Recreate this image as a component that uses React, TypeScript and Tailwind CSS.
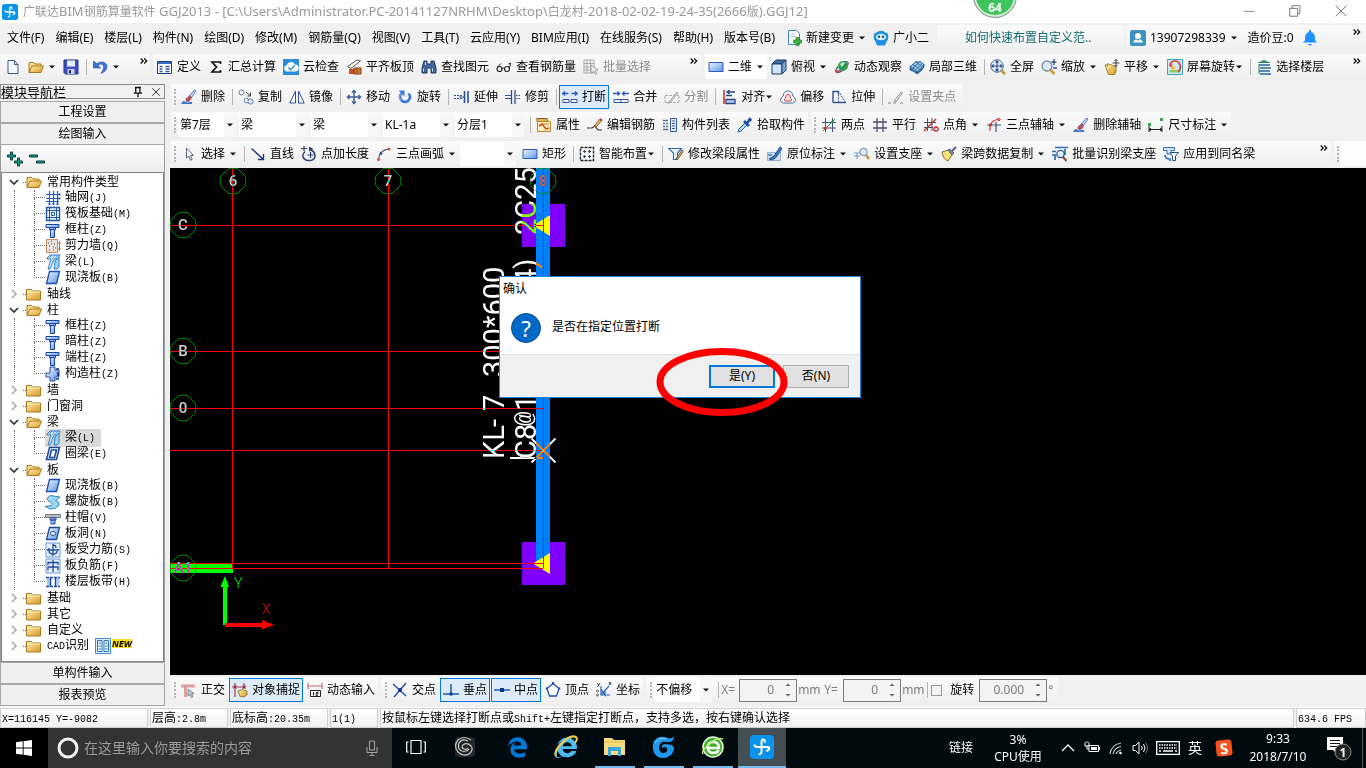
import React from "react";
import { FaInternetExplorer } from "react-icons/fa";
import { FaEdgeLegacy } from "react-icons/fa6";

type IconProps = { children: React.ReactNode; size?: string };

const Svg = ({ children, size = "h-4 w-4" }: IconProps) => (
  <svg viewBox="0 0 16 16" className={`${size} shrink-0`} aria-hidden="true">
    {children}
  </svg>
);

const folder = (
  <>
    <path d="M.5 3.5h5l1 1.5h8v9H.5z" fill="url(#gold)" stroke="#a9791f" />
    <path d="M1.5 6h12.5" stroke="#fff3c4" />
  </>
);
const folderOpen = (
  <>
    <path d="M1 13V3.500h4.500L7 5h6v3" fill="#f7d98a" stroke="#a9791f" />
    <path d="M1 13.500 4 7h11.500L13 13.500z" fill="url(#gold)" stroke="#a9791f" />
  </>
);
const column = (
  <>
    <path d="M1 2.500h13v3H1z" fill="url(#blue)" stroke="#12439c" />
    <path d="M4.500 5.500h6v2h-6z" fill="#9cc0f5" stroke="#12439c" />
    <path d="M5.500 7.500h4v8h-4z" fill="url(#blue)" stroke="#12439c" />
  </>
);
const slab = <path d="M4.500 1.500h10l-3 12h-10z" fill="url(#blue)" stroke="#1b4cb0" strokeWidth="1.300" />;
const brush = (
  <>
    <path d="M0 15q2-4 4-2.500t5 .5 2 2z" fill="#3f76c9" />
    <path d="m13.500 1 1.500 1-4.500 6.500-2-1.500z" fill="#cfe0f7" stroke="#2b58a6" strokeWidth=".8" />
    <path d="m8.500 7 2 1.500-2 3.500-3 .5-.5-2.500z" fill="#c9505a" stroke="#6b3340" strokeWidth=".7" />
  </>
);
const rect = <path d="M1 3.500h14v9H1z" fill="url(#blue)" stroke="#2a5cc4" />;

const icons: Record<string, React.ReactNode> = {
  folder,
  folderOpen,
  column,
  slab,
  brush,
  rect,
  newFile: <path d="M3 1.500h6.500l3.500 4v9H3zM9.500 1.500v4H13" fill="#f6faff" stroke="#3e5c8a" />,
  save: (
    <>
      <path d="M1 1h14v14H2.500L1 13.500z" fill="#3b50c4" stroke="#22307f" />
      <path d="M4 1.500h8v6H4z" fill="#e8edff" />
      <path d="M4.500 10h7v5h-7z" fill="#c9d2f2" />
      <path d="M6 11h2v3.500H6z" fill="#22307f" />
    </>
  ),
  undo: <path d="M1.500 2v7h7L6 6.500Q9 4 11 6t-2 8.500q6.500-2.500 6-8Q12 .5 4.500 4.500z" fill="#3a72d8" stroke="#1c469e" strokeWidth=".6" />,
  define: (
    <>
      <path d="M.5 2.500h14v12H.5z" fill="#fff" stroke="#1b3f86" />
      <path d="M1 3h13v2H1z" fill="#3a6bc0" />
      <path d="M2.500 7.500h3m-3 2.500h3m-3 2.500h3M8.500 7.500h4m-4 2.500h4m-4 2.500h4" stroke="#36578f" strokeWidth="1.300" />
    </>
  ),
  sigma: <path d="M12.500 5V3H4l4.500 5L4 13h8.500v-2" fill="none" stroke="#111" strokeWidth="1.700" />,
  cloud: (
    <>
      <path d="M0 0h16v16H0z" fill="#2b8ed6" />
      <path d="M4 12.500a3.200 3.200 0 0 1-.3-6.300A4.500 4.500 0 0 1 12 5.500a3.500 3.500 0 0 1 .3 7z" fill="#fff" />
      <path d="m5.500 8.500 2 2.200L12 6.500" fill="none" stroke="#2b8ed6" strokeWidth="1.500" />
    </>
  ),
  align3: (
    <>
      <path d="M1.500 7.500 11 1l3.500 1L5 9.500z" fill="#fff4d0" stroke="#445c8a" />
      <path d="M3 10h6v5H3z" fill="#c9542b" />
      <path d="M8 9h7v6H8z" fill="#e2a33b" stroke="#843312" />
      <path d="M8 11h7m-7 2h7M11 9v6" stroke="#843312" strokeWidth=".7" />
    </>
  ),
  binoculars: (
    <>
      <path d="M3 2h3v3h4V2h3l2 7v5h-5V9H6v5H1V9z" fill="#46679d" stroke="#1d3567" />
      <path d="M2.500 9.500v3M11.500 9.500v3M4.500 3v3" stroke="#d3e3fa" />
    </>
  ),
  glasses: (
    <>
      <circle cx="3.500" cy="10" r="2.500" fill="none" stroke="#222" strokeWidth="1.200" />
      <circle cx="11" cy="10" r="2.500" fill="none" stroke="#222" strokeWidth="1.200" />
      <path d="M6 9.500q1.500-1 2.500 0M1.500 8 5 4.500M13.500 9l1-5-2 1" fill="none" stroke="#222" />
    </>
  ),
  batch: (
    <>
      <path d="M1 1h10v13H1zM1 4.500h10M1 8h10M1 11h10M4 1v13M7.500 1v13" fill="none" stroke="#a9a9a9" />
      <path d="m8 6 7 5-3 .5 2 3-1.500 1-1.500-3L8 14z" fill="#e8e8e8" stroke="#999" strokeWidth=".8" />
    </>
  ),
  cube: (
    <>
      <path d="m1 5 4-4h10l-4 4z" fill="#3f6da5" stroke="#1b3a66" />
      <path d="M1 5h10v10H1z" fill="#cfe6fb" stroke="#1b3a66" />
      <path d="m11 5 4-4v10l-4 4z" fill="#7ea8d8" stroke="#1b3a66" />
    </>
  ),
  orbit: (
    <>
      <ellipse cx="8" cy="8" rx="7.500" ry="3" transform="rotate(-40 8 8)" fill="none" stroke="#3c4d8a" />
      <circle cx="9" cy="7" r="5" fill="#33a64b" />
      <path d="M6 5q3-3 5-1L8 8z" fill="#bff0c5" />
      <path d="M2 13Q8 12 13 4" fill="none" stroke="#3c4d8a" />
      <circle cx="3" cy="12.500" r="1.800" fill="#d4483b" />
    </>
  ),
  local3d: (
    <>
      <path d="m1 8 6-5.500q2 1.500 4 0l4 3q-1 3-7 7.500-1-3-7-5z" fill="#9cc8ec" stroke="#21558d" />
      <path d="m1 8v3q4 1 7 4v-2M8 13v2q6-4 7-7.500V5.500" fill="#3274ad" stroke="#21558d" strokeWidth=".8" />
      <path d="m4 5.500 6.500 4.500M7.500 3.500l5 4M4 9l6-5.500M6.500 11l6.500-6" stroke="#21558d" strokeWidth=".8" />
    </>
  ),
  full: (
    <>
      <circle cx="7" cy="7" r="6.200" fill="#e5effc" stroke="#3c587f" />
      <path d="M7 2v10M2 7h10M5.500 3.500 7 2l1.500 1.500M5.500 10.500 7 12l1.500-1.500M3.500 5.500 2 7l1.500 1.500M10.500 5.500 12 7l-1.500 1.500" fill="none" stroke="#254e93" strokeWidth="1.100" />
      <path d="m11.500 11.500 3.500 3.500" stroke="#c99131" strokeWidth="2.500" />
    </>
  ),
  zoom: (
    <>
      <circle cx="6" cy="7" r="5" fill="#dcebfb" stroke="#7d8ba0" strokeWidth="1.300" />
      <path d="m9.500 11 4 4" stroke="#cf9a34" strokeWidth="2.500" />
      <path d="M13 0v6M10.500 3h5M12 9h4" stroke="#2b4f91" strokeWidth="1.300" />
    </>
  ),
  pan: (
    <>
      <path d="M1 6q1-1 2.500 1L3 5q1.500-1 2.500 1 .5-1.500 2 0t4 1q2 5-1 8.500H4.500z" fill="url(#gold)" stroke="#8a6b24" strokeWidth=".8" />
      <path d="M12 .5v7M8.500 4H15.500M10.500 2 12 .5 13.500 2M10.500 6 12 7.500 13.500 6" fill="none" stroke="#333" strokeWidth=".9" />
    </>
  ),
  screenRotate: (
    <>
      <path d="M.5.500h15v15H.5z" fill="#cdebf5" stroke="#38a5cc" />
      <path d="M2.500 11h11v2.500h-11z" fill="#8fce63" />
      <path d="M3 6Q4 2 8 2t5 4-2 7" fill="none" stroke="#e03a32" strokeWidth="1.700" />
      <circle cx="6" cy="9" r="2" fill="#f5b83b" />
      <path d="m1.500 7 3 1 1-3z" fill="#e03a32" />
    </>
  ),
  floors: (
    <>
      <path d="M1 4 8 1l7 3H1z" fill="#2f8b5b" />
      <path d="M3 6h11M4 9h11M3 12h11M4 15h11" stroke="#246a9f" strokeWidth="1.600" />
      <path d="M3 5v10" stroke="#2f8b5b" />
    </>
  ),
  copy: (
    <>
      <circle cx="3.500" cy="3.500" r="2.500" fill="#fff" stroke="#5b79a6" />
      <circle cx="8.500" cy="11.500" r="2.300" fill="#fff" stroke="#5b79a6" />
      <circle cx="12.500" cy="12.500" r="2.600" fill="#e4eefb" stroke="#5b79a6" />
      <path d="m8 3 4 3.500M12.500 3.500v3.500h-3" fill="none" stroke="#3a3a3a" />
    </>
  ),
  mirror: (
    <>
      <path d="M6.500 2v12H.8z" fill="#fff" stroke="#2a4f9c" />
      <path d="M9.500 2v12h5.700z" fill="#fff" stroke="#2a4f9c" />
    </>
  ),
  move: <path d="M8 1v14M1 8h14M6 3.500 8 1.500l2 2M6 12.500l2 2 2-2M3.500 6l-2 2 2 2M12.500 6l2 2-2 2" fill="none" stroke="#3f5f94" strokeWidth="1.500" />,
  rotate: (
    <>
      <path d="M4.500 4.500Q1.500 8 4.500 11.500q3.500 3 7 0 3-3.500 0-7" fill="none" stroke="#3978dc" strokeWidth="2.600" />
      <path d="M1.500 1.500h6v6z" fill="#3978dc" />
      <path d="M3.500 5Q1 8.500 4 12" fill="none" stroke="#9cc2f7" strokeWidth=".8" />
    </>
  ),
  extend: (
    <>
      <path d="M0 6.500h8m-8 3h8" stroke="#2c4f91" strokeDasharray="2 1" />
      <path d="M10.500 2v12M14 2v12" stroke="#2c4f91" strokeWidth="1.600" />
      <path d="M5 8h5" stroke="#2c4f91" />
    </>
  ),
  trim: (
    <>
      <path d="M0 6.500h6m-6 3h6" stroke="#2c4f91" />
      <path d="M6.500 1v14M10 1v14" stroke="#2c4f91" strokeWidth="1.300" />
      <path d="M11 6.500h5m-5 3h5" stroke="#2c4f91" strokeDasharray="1.500 1" />
    </>
  ),
  breakIt: (
    <>
      <path d="M1 10.500h6v3H1zM9 10.500h6v3H9z" fill="#fff" stroke="#32549b" />
      <path d="M0 4.500h6.500M9.500 4.500H16M3 2.500 1 4.500l2 2M13 2.500l2 2-2 2" fill="none" stroke="#2c5bc0" strokeWidth="1.400" />
    </>
  ),
  merge: (
    <>
      <path d="M1 10.500h14v3H1zM8 10.500v3" fill="#fff" stroke="#32549b" />
      <path d="M0 4.500h6.500M9.500 4.500H16M4.500 2.500l2 2-2 2M11.500 2.500l-2 2 2 2" fill="none" stroke="#2c5bc0" strokeWidth="1.400" />
    </>
  ),
  split: (
    <>
      <path d="M1 6.500h14M1 13.500h14M1 7v6M15 7v6" fill="none" stroke="#aaa" strokeDasharray="3 1" />
      <path d="m4 14 9-11 1 1L6 14z" fill="#d5d5d5" stroke="#999" strokeWidth=".8" />
    </>
  ),
  alignTo: (
    <>
      <path d="M3 1v14" stroke="#c22b2b" strokeWidth="1.500" />
      <path d="M5 10.500h9v4H5zM5 6.500h6" fill="#bcd2f4" stroke="#24478d" strokeWidth="1.300" />
      <path d="M14 3H6M8.500 1 6 3l2.500 2" fill="none" stroke="#24478d" strokeWidth="1.300" />
    </>
  ),
  offset: (
    <>
      <path d="M3 14q-4-1.500-1.500-5.500L3 7q1-5 5-5t5 5l1.500 1.500Q17 12.500 13 14z" fill="#fff" stroke="#4a6a9c" />
      <path d="M5 12Q3 10 5.500 9 6 5 8 5t2.500 4Q13 10 11 12z" fill="#fbe3e3" stroke="#cc3a3a" />
    </>
  ),
  stretch: (
    <>
      <path d="M2 13.500v-11h5.500v3" fill="none" stroke="#2c4f91" strokeWidth="1.400" />
      <path d="M2 13.500h13" stroke="#2c4f91" strokeWidth="1.400" />
      <path d="M7.500 2.500v11M9 4.500l5.500 9" stroke="#2c4f91" strokeDasharray="2 1" />
    </>
  ),
  grip: (
    <>
      <path d="M0 14h3M5 14h3M12 14h3" stroke="#aaa" strokeWidth="1.500" />
      <path d="m6 12 7-9 1.500 1L8 13z" fill="#ddd" stroke="#999" />
    </>
  ),
  props: (
    <>
      <path d="M1 1.500h10l1 3H1z" fill="#dcb258" stroke="#87601b" />
      <path d="M1.500 4.500h13v10h-13z" fill="#fff2c7" stroke="#b8822b" />
      <path d="m3 9 3-2 4 5 3-1" fill="none" stroke="#c45b24" strokeWidth="1.800" />
      <path d="M7 7h6" stroke="#b8822b" />
    </>
  ),
  editBar: (
    <>
      <path d="M0 11h5l3-2 3 4h4" fill="none" stroke="#333" strokeWidth="1.200" />
      <path d="m7 9 6-7 2 1.500L9 10z" fill="#e4b15a" stroke="#7a4a1c" strokeWidth=".8" />
      <path d="m13 2 2 1.500" stroke="#c93434" strokeWidth="2" />
    </>
  ),
  list: (
    <>
      <path d="M8.500 1.500h6v13h-6z" fill="#e9f1fd" stroke="#33559a" />
      <path d="M10 4h3m-3 2.500h3M10 9h3m-3 2.500h3" stroke="#33559a" />
      <path d="M1 3.500h5M1 6.500h2m1 0h2M1 9.500h2m1 0h2M1 12.500h5" stroke="#5c6d8c" strokeWidth="1.300" />
    </>
  ),
  pick: (
    <>
      <path d="m1 15 1-3 6-6 2 2-6 6z" fill="#b9e0f8" stroke="#28579b" />
      <path d="m7 4 5 5M9.500 6.500l3.500-4" stroke="#1c4fae" strokeWidth="2.600" />
      <path d="M12 3.500 14 1.500" stroke="#1c4fae" strokeWidth="3.500" />
    </>
  ),
  twoPoint: (
    <>
      <path d="M4.500 1v14M11.500 1v14M1 5.500h14M1 11h14" stroke="#43517a" />
      <path d="m2 14 12-12" stroke="#2a8f3b" />
      <circle cx="4.500" cy="11" r="1.500" fill="#d92b2b" />
      <circle cx="11.500" cy="5" r="1.500" fill="#2a8f3b" />
    </>
  ),
  parallel: (
    <>
      <path d="M5 1v14M11 1v14" stroke="#3c4f86" strokeWidth="1.300" />
      <path d="M1 5h14M1 11h14" stroke="#5d4468" strokeWidth="1.300" />
    </>
  ),
  pointAngle: (
    <>
      <path d="M4.500 1v13M9 1v13M1 5.500h12M1 10.500h9" stroke="#43517a" />
      <path d="m1 14 12-12" stroke="#c92b2b" strokeWidth="1.200" />
      <circle cx="13" cy="12" r="2" fill="none" stroke="#d92b2b" strokeWidth="1.400" />
    </>
  ),
  threeAxis: (
    <>
      <path d="M1 8h14M10 5v10" stroke="#43517a" strokeWidth="1.200" />
      <path d="M4 14Q3 3 13 2.500" fill="none" stroke="#d02f2f" strokeWidth="1.200" />
      <circle cx="13" cy="2.500" r="1.200" fill="none" stroke="#d02f2f" />
      <circle cx="4.500" cy="8" r="1.200" fill="none" stroke="#d02f2f" />
    </>
  ),
  dim: (
    <>
      <path d="M1 9v6M14 9v6M1 12.500h13M3 11l-2 1.500L3 14M12 11l2 1.500-2 1.500" fill="none" stroke="#222" />
      <path d="M0 6h3v3H0zM12 1h3v3h-3z" fill="#3ba54b" />
    </>
  ),
  cursor: <path d="M5.500 2v10l2.300-2 1.700 4.200 1.700-.7-1.700-4h3z" fill="#fff" stroke="#5a6684" />,
  line: <path d="m1.500 2.500 12 11M13.500 8v5.500H8" fill="none" stroke="#20376f" strokeWidth="1.400" />,
  lengthPt: (
    <>
      <path d="M4 5.500q-5 5 1 8.500 7 2 9-3 .5-5-4.500-7.500" fill="none" stroke="#2b4170" strokeWidth="1.500" />
      <path d="M0 2.500h6M3 0v5M6.500 9h6M9.500 6v6" stroke="#2b4170" strokeWidth="1.200" />
      <path d="m8 .5 4.500 2.500L8 5.500z" fill="#2b4170" />
    </>
  ),
  arc: (
    <>
      <path d="M2.500 14Q3 4 13 3" fill="none" stroke="#33457a" strokeWidth="1.200" />
      <circle cx="2.500" cy="13.500" r="1.500" fill="#e0492c" />
      <circle cx="5" cy="7.500" r="1.400" fill="#33457a" />
      <circle cx="13" cy="3" r="1.500" fill="#e0492c" />
    </>
  ),
  smart: (
    <>
      <path d="M1.500 1.500h13v13h-13z" fill="#fff" stroke="#222" strokeDasharray="3 1" strokeWidth="1.400" />
      <path d="M5.500 4v3M4 5.500h3M10.500 4v3M9 5.500h3M5.500 9v3M4 10.500h3M10.500 9v3M9 10.500h3" stroke="#345" strokeWidth="1.200" />
    </>
  ),
  beamEdit: (
    <>
      <path d="M.5 2.500h13L9.500 7v6.500H5.500V7z" fill="#e8f5ff" stroke="#2d6fb0" strokeWidth="1.200" />
      <path d="m8 13 6-9 1.500 1.500-6 8z" fill="#efb65c" stroke="#553a1c" strokeWidth=".8" />
    </>
  ),
  annotate: (
    <>
      <path d="M.5 6.500h13v8H.5z" fill="#cfe0f7" stroke="#8fb3dd" />
      <path d="m2 13 5-3 6-9 2 1.500-6 9-4 2.500z" fill="#3f79c9" stroke="#173f80" strokeWidth=".9" />
      <path d="M1 9h4" stroke="#3f79c9" strokeWidth="1.500" />
    </>
  ),
  support: (
    <>
      <path d="M0 7h8M0 10h6M3 7v6" fill="none" stroke="#76a2d0" strokeWidth="1.200" />
      <circle cx="9.500" cy="6" r="3.700" fill="#dcecfb" stroke="#6d87a8" />
      <path d="m12 9 3 4" stroke="#c98a3c" strokeWidth="2.200" />
    </>
  ),
  spanCopy: (
    <>
      <path d="m1 6 6-2 4 5-4 6q-5-2-6-9z" fill="#f2e17c" stroke="#85762a" />
      <path d="m7 4 2-1 4 4-2 2z" fill="#8b93a8" stroke="#4a5268" strokeWidth=".8" />
      <path d="m11 5 4-4" stroke="#5a648a" strokeWidth="2.200" />
    </>
  ),
  recog: (
    <>
      <path d="M3 1.500h13M0 5.500h4M0 9h4M3 9v5M13 3v6" stroke="#2e6cae" strokeWidth="1.700" />
      <circle cx="8.500" cy="8" r="3.700" fill="#dcecfb" stroke="#2e5c94" strokeWidth="1.300" />
      <path d="m11 11 3.500 4" stroke="#8a4b32" strokeWidth="2" />
    </>
  ),
  applyTo: (
    <>
      <path d="M.5 1.500h11v3H8V8H4V4.500H.5z" fill="#cfe6fb" stroke="#2d6fb0" />
      <path d="M7 6.500h8.500L12.500 10v4.500h-3V10z" fill="#fff" stroke="#1b4f8f" />
      <path d="M2 9q0 4 5 4v2" fill="none" stroke="#2d6fb0" strokeWidth="1.600" />
    </>
  ),
  ortho: (
    <>
      <path d="M0 2.500h14v3H6V15H3V5.500H0z" fill="#dda0a0" />
      <path d="M7 7v7l2-1.500 1.500 3 1.500-.8-1.500-3h2.500z" fill="#c4ccd8" stroke="#6a7688" strokeWidth=".8" />
    </>
  ),
  snap: (
    <>
      <path d="M3 1v14M12 1v6M0 5h14" stroke="#b23a4a" strokeWidth="1.200" />
      <path d="m1.500 3.500 3 3m0-3-3 3M10.500 3.500l3 3m0-3-3 3" stroke="#8c2634" />
      <path d="M6 9q4-3 9 0v4q-3 3-7 1.500z" fill="url(#gold)" stroke="#8a6b24" strokeWidth=".8" />
    </>
  ),
  dynInput: (
    <>
      <path d="M1 1v6M15 1v6M1 4h14" stroke="#c26a74" strokeWidth="1.200" />
      <path d="M3.500 8.500h10v6h-10z" fill="#fff" stroke="#222" />
      <path d="M6.500 10v3.500M9 10.500h2v1.300H9v1.500h2" fill="none" stroke="#222" />
    </>
  ),
  cross: (
    <>
      <path d="m1 2 13 12M14 1 2 15" stroke="#1d4fae" strokeWidth="1.400" />
      <circle cx="8" cy="8" r="2" fill="#14357f" />
    </>
  ),
  perp: (
    <>
      <path d="M8 2v10M0 12h16" stroke="#1d5fb8" strokeWidth="1.500" />
      <path d="M6.500 10.500h3v3h-3z" fill="#14357f" />
    </>
  ),
  mid: (
    <>
      <path d="M0 8h16" stroke="#1d5fb8" strokeWidth="1.500" />
      <path d="M6 6h4v4H6z" fill="#14357f" />
    </>
  ),
  vertex: (
    <>
      <path d="m8 1.500 6 5-2.500 7.500h-7L2 6.500z" fill="#fff" stroke="#1d4fae" strokeWidth="1.300" />
      <path d="M7 0h2v2.500H7zM.8 5.500h2v2h-2zM13.200 5.500h2v2h-2z" fill="#1d4fae" />
    </>
  ),
  coord: (
    <>
      <path d="M5 4v9h9M5 13l8-9M5 7l4 6V9.500" fill="none" stroke="#2b66b8" strokeWidth="1.200" />
      <path d="M1 1l1.500 2M4 1 1.500 5M13 0l2 3M15 0l-2 3" stroke="#444" />
      <circle cx="1.500" cy="9" r="1" fill="none" stroke="#444" strokeWidth=".8" />
      <circle cx="1.500" cy="13" r="1" fill="none" stroke="#444" strokeWidth=".8" />
    </>
  ),
  newDoc: (
    <>
      <path d="M2.500.500h8l3 3v11h-11z" fill="#fff" stroke="#3b87c4" />
      <path d="M4.500 4h5M4.500 6.500h6" stroke="#9fc4e4" />
      <path d="M10 7.500h3v2.500h2.500v3H13v2.500h-3V13H7.500v-3H10z" fill="#3fae3f" stroke="#1e7a26" strokeWidth=".6" />
    </>
  ),
  robot: (
    <>
      <path d="M1 5Q0 3 2 3.500 8-2 14 3.500 16 3 15 5q1 4-1.500 6.500L12 15.500H4L2.500 11.500Q0 9 1 5z" fill="#1f8fdf" />
      <ellipse cx="8" cy="7" rx="5.200" ry="3.300" fill="#d9f0ff" />
      <circle cx="6" cy="6.800" r="1.200" fill="#124d84" />
      <circle cx="10" cy="6.800" r="1.200" fill="#124d84" />
    </>
  ),
  user: (
    <>
      <rect width="16" height="16" rx="2" fill="#3f93c4" />
      <circle cx="8" cy="6" r="3" fill="#fff" />
      <path d="M3 12.500q1-3 3-3.200l2 1.400 2-1.400q2 .2 3 3.200z" fill="#fff" />
    </>
  ),
  bell: (
    <>
      <path d="M7 0h2v2q4 1 4 6v2.500l2 2H1l2-2V8q0-5 4-6z" fill="#1e90ff" />
      <path d="M6 14h4q-2 3-4 0z" fill="#1e90ff" />
    </>
  ),
  axisNet: (
    <>
      <path d="M4.500 1v12M8.500 1v12M12.500 1v12M1 4.500h13M1 8.500h13M1 11.500h13" stroke="#2a5bc0" strokeWidth="1.200" />
      <path d="M3.500 13h2v2h-2zM7.500 13h2v2h-2zM11.500 13h2v2h-2zM13.500 3.500h2v2h-2zM13.500 7.500h2v2h-2z" fill="#2a5bc0" />
    </>
  ),
  raft: (
    <>
      <path d="M1.500 1.500h13v13h-13z" fill="#e6f2ff" stroke="#1f5a9e" strokeWidth="1.400" />
      <path d="M4.500 1.500v13M11.500 1.500v13M1.500 4.500h13M1.500 11.500h13" stroke="#1f5a9e" />
      <path d="M6.500 6.500h3v3h-3z" fill="none" stroke="#1f5a9e" />
    </>
  ),
  shearWall: (
    <>
      <path d="M1.500 1.500h11v13h-11z" fill="#e8e2dd" stroke="#c98a62" />
      <path d="M3 5h1m2-2h1m2 3h1M4 8h1m3 1h1M4 12h1m3 0h1m1-2h1M6 6h1" stroke="#555" />
      <path d="M13 5h3M13 11h3M14.500 3v10" stroke="#d96a2b" />
    </>
  ),
  beam: (
    <>
      <path d="m2 4 3-3h10l-2 4H9L5 15H3L6 5H2z" fill="#d6ecff" stroke="#2b7cc4" />
      <path d="m9 15 1-8 4-4v10l-2 2z" fill="#9fd0f7" stroke="#2b7cc4" />
      <path d="m4 4 3-3M7 5l3-4M10 5l3-4" stroke="#2b7cc4" strokeWidth=".8" />
    </>
  ),
  ringBeam: <path d="M4.500 1.500h10l-3 12h-10zM6.500 4h5l-2 7.500h-5z" fill="#fff" stroke="#1c4a9e" strokeWidth="1.600" />,
  tieColumn: (
    <>
      <path d="M5 1h5v3h4v7h-4v4H5v-4H1V7h4z" fill="url(#blue)" stroke="#244e99" />
      <path d="M11 3h3M11 13h3M13 6v4" stroke="#12306c" strokeWidth="1.700" />
    </>
  ),
  spiral: <path d="M5 1.500 15 3l-4.500 3.500Q15 8 14 11q-3 4-8 4L0 12.500l6-1q3-1 0-3Q1 6 2.500 4z" fill="#9fd8f2" stroke="#2a86bd" />,
  cap: (
    <>
      <path d="M.5 4.500h15v3H.5z" fill="#b8bcc4" stroke="#70757e" />
      <path d="M5 8h6v2H5zM6 10h4v4H6z" fill="url(#blue)" stroke="#1c4fae" />
    </>
  ),
  hole: (
    <>
      <path d="M4.500 1.500h10l-3 12h-10z" fill="url(#blue)" stroke="#1c4a9e" strokeWidth="1.300" />
      <ellipse cx="8" cy="7.500" rx="2.500" ry="2" fill="#fff" stroke="#1c4a9e" />
    </>
  ),
  rebarS: (
    <>
      <path d="M1 1h14v14H1z" fill="#e6f0fd" stroke="#6b95d6" />
      <path d="M8 2v12M2 8h12M4 6v3q0 3 4 3t4-3M8 3q3 0 3 3" fill="none" stroke="#1b4a9c" strokeWidth="1.300" />
    </>
  ),
  rebarF: (
    <>
      <path d="M1 1h14v14H1z" fill="#e6f0fd" stroke="#6b95d6" />
      <path d="M8 2v12M3 7V4.500h10V7M3 12.500V9h10v3.500" fill="none" stroke="#1b4a9c" strokeWidth="1.300" />
    </>
  ),
  band: (
    <>
      <path d="M2 4h3v8H2zM11.500 4h3v8h-3z" fill="#a9ccf5" />
      <path d="M1 3.500h14M1 12.500h14" stroke="#1b4a9c" strokeWidth="1.500" strokeDasharray="3 1" />
      <path d="M5.500 3v10M10.500 3v10" stroke="#1b4a9c" strokeWidth="1.500" />
    </>
  ),
  cad: (
    <>
      <path d="M.5.500h15v15H.5z" fill="#e1f1ff" stroke="#3d8ad4" />
      <path d="M2.500 2.500h4.500v11H2.500zM9 2.500h4.500v11H9z" fill="#fff" stroke="#2571bd" />
      <path d="M3.500 5h2.500M3.500 8h2.500M3.500 11h2.500M10 5h2.500M10 8h2.500M10 11h2.500" stroke="#2571bd" />
    </>
  ),
};

const Icon = ({ name, size }: { name: string; size?: string }) => <Svg size={size}>{icons[name]}</Svg>;

const Caret = ({ tight = false }: { tight?: boolean }) => (
  <svg viewBox="0 0 8 8" className={tight ? "-ml-1 h-2 w-2 shrink-0" : "h-2 w-2 shrink-0"} aria-hidden="true">
    <path d="M1 2.500h6L4 5.500z" fill="#111" />
  </svg>
);

type ToolProps = { icon: string; label?: string; name?: string; arrow?: boolean | "tight"; disabled?: boolean; active?: boolean };

const Tool = ({ icon, label, name, arrow, disabled, active }: ToolProps) => (
  <button
    type="button"
    disabled={disabled}
    aria-label={label ?? name}
    className={`flex h-6 shrink-0 items-center gap-1 whitespace-nowrap border px-0.5 ${
      active ? "border-[#0078d7] bg-[#dcebf7]" : "border-transparent"
    } ${disabled ? "text-[#8c8c8c]" : "text-black"}`}
  >
    <Icon name={icon} />
    {label && <span>{label}</span>}
    {arrow && <Caret tight={arrow === "tight"} />}
  </button>
);

const Sep = () => <span className="ml-[3px] mr-px h-4 w-px shrink-0 bg-[#b4b4b4]" />;
const Grip = () => <span className="mr-px h-4 w-0 shrink-0 border-l-2 border-dotted border-[#b5b5b5]" />;
const More = () => (
  <svg viewBox="0 0 8 6" className="mb-3 h-1.5 w-2 shrink-0" aria-hidden="true">
    <path d="m.7.500 2.500 2.500L.7 5.500M4.200.500l2.500 2.500-2.500 2.500" fill="none" stroke="#111" strokeWidth="1.300" />
  </svg>
);

const Bar = ({ children, className = "" }: { children: React.ReactNode; className?: string }) => (
  <div className={`flex h-[26px] items-center gap-px bg-linear-to-b from-[#fbfbfb] to-[#eeeeee] ${className}`}>{children}</div>
);

const Combo = ({ value, label, width }: { value: string; label: string; width: string }) => (
  <div className={`relative mr-0.5 h-6 shrink-0 bg-white ${width}`}>
    <select aria-label={label} defaultValue={value} className="h-full w-full appearance-none bg-transparent pl-0.5 pr-3 outline-none">
      <option>{value}</option>
    </select>
    <span className="pointer-events-none absolute inset-y-0 right-0 flex w-3 items-center bg-[#f7f7f7] pl-0.5">
      <Caret />
    </span>
  </div>
);

/* Sets the Latin runs of a mixed string in a size or face of their own. */
const Mixed = ({ text, latin }: { text: string; latin: string }) => (
  <span className="whitespace-pre">
    {text.split(/([\x20-\x7e]+)/).map((part, i) =>
      i % 2 ? (
        <span key={i} className={latin}>
          {part}
        </span>
      ) : (
        part
      ),
    )}
  </span>
);
const Cells = ({ text }: { text: string }) => <Mixed text={text} latin="font-['Liberation_Mono',monospace] text-[10px]" />;

const menus = ["文件(F)", "编辑(E)", "楼层(L)", "构件(N)", "绘图(D)", "修改(M)", "钢筋量(Q)", "视图(V)", "工具(T)", "云应用(Y)", "BIM应用(I)", "在线服务(S)", "帮助(H)", "版本号(B)"];

type Leaf = [icon: string, label: string];
const tree: { label: string; items?: Leaf[]; selected?: number }[] = [
  { label: "常用构件类型", items: [["axisNet", "轴网(J)"], ["raft", "筏板基础(M)"], ["column", "框柱(Z)"], ["shearWall", "剪力墙(Q)"], ["beam", "梁(L)"], ["slab", "现浇板(B)"]] },
  { label: "轴线" },
  { label: "柱", items: [["column", "框柱(Z)"], ["column", "暗柱(Z)"], ["column", "端柱(Z)"], ["tieColumn", "构造柱(Z)"]] },
  { label: "墙" },
  { label: "门窗洞" },
  { label: "梁", items: [["beam", "梁(L)"], ["ringBeam", "圈梁(E)"]], selected: 0 },
  {
    label: "板",
    items: [["slab", "现浇板(B)"], ["spiral", "螺旋板(B)"], ["cap", "柱帽(V)"], ["hole", "板洞(N)"], ["rebarS", "板受力筋(S)"], ["rebarF", "板负筋(F)"], ["band", "楼层板带(H)"]],
  },
  { label: "基础" },
  { label: "其它" },
  { label: "自定义" },
  { label: "CAD识别" },
];

const SideButton = ({ children }: { children: React.ReactNode }) => (
  <button type="button" className="h-[22px] w-full shrink-0 border border-[#a8a8a8] bg-[#efefef] text-center leading-5">
    {children}
  </button>
);

const Sidebar = () => (
  <aside className="flex w-[165px] shrink-0 flex-col">
    <header className="mb-0.5 flex h-[15px] shrink-0 items-center border border-[#8c8c8c] text-[13px] leading-3">
      <span>模块导航栏</span>
      <button type="button" aria-label="固定" className="ml-auto h-3 w-3">
        <Svg size="h-3 w-3">
          <path d="M4 2h8M5 2v7M10.500 2v7M2.500 9.500h11M8 9.500V15" fill="none" stroke="#111" strokeWidth="1.700" />
        </Svg>
      </button>
      <button type="button" aria-label="关闭" className="ml-1.5 mr-0.5 h-3 w-3">
        <Svg size="h-3 w-3">
          <path d="m3 3 10 10M13 3 3 13" stroke="#333" strokeWidth="1.300" />
        </Svg>
      </button>
    </header>
    <SideButton>工程设置</SideButton>
    <SideButton>绘图输入</SideButton>
    <div className="flex min-h-0 flex-1 flex-col border-x border-[#9a9a9a]">
      <div className="flex h-[27px] shrink-0 items-center gap-1.5 bg-linear-to-b from-[#fcfcfc] to-[#ededed] pl-1.5">
        <button type="button" aria-label="全部展开">
          <Svg>
            <path d="M3.500 1h2v3h3v2h-3v3h-2V6h-3V4h3zM10.500 7h2v3h3v2h-3v3h-2v-3h-3v-2h3z" fill="#12a08a" stroke="#083d3a" />
          </Svg>
        </button>
        <button type="button" aria-label="全部折叠">
          <Svg>
            <path d="M.5 4h8v2h-8zM7.500 10h8v2h-8z" fill="#12a08a" stroke="#083d3a" />
          </Svg>
        </button>
      </div>
      <ul className="min-h-0 flex-1 overflow-hidden border border-[#81868c] bg-white pt-px">
        {tree.map((group) => (
          <li key={group.label}>
            <div className="flex h-4 items-center">
              <svg viewBox="0 0 12 12" className="ml-1.5 h-3 w-3" aria-hidden="true">
                {group.items ? (
                  <path d="m2 4 4 4 4-4" fill="none" stroke="#333" strokeWidth="1.700" />
                ) : (
                  <path d="m4 2 4 4-4 4" fill="none" stroke="#a3a3a3" strokeWidth="1.500" />
                )}
              </svg>
              <span className="ml-[3px] w-[3px] border-t border-dotted border-[#777]" />
              <Icon name={group.items ? "folderOpen" : "folder"} />
              <span className="ml-[5px]">
                <Cells text={group.label} />
              </span>
              {group.label === "CAD识别" && (
                <span className="ml-1.5 flex items-center gap-px">
                  <Icon name="cad" />
                  <b className="mb-1.5 bg-[#ffe11a] text-[9px] italic leading-[9px] text-black">NEW</b>
                </span>
              )}
            </div>
            {group.items && (
              <ul>
                {group.items.map(([icon, label], i) => (
                  <li key={label} className="flex h-4 items-center">
                    <span className="ml-3 h-4 w-5 border-l border-dotted border-[#777]" />
                    <span className="flex h-4 w-[11px] flex-col">
                      <span className="h-2 border-b border-l border-dotted border-[#777]" />
                      {i < group.items!.length - 1 && <span className="h-2 border-l border-dotted border-[#777]" />}
                    </span>
                    <span className={`flex items-center gap-1 pr-1.5 ${group.selected === i ? "bg-[#d9d9d9]" : ""}`}>
                      <Icon name={icon} />
                      <Cells text={label} />
                    </span>
                  </li>
                ))}
              </ul>
            )}
          </li>
        ))}
      </ul>
    </div>
    <SideButton>单构件输入</SideButton>
    <SideButton>报表预览</SideButton>
  </aside>
);

const bubbles: [number, number, string][] = [
  [63, 13, "6"],
  [218, 13, "7"],
  [373, 13, "8"],
  [13, 57, "C"],
  [13, 183, "B"],
  [13, 240, "0"],
  [13, 400, "A1"],
];

const beamNotes: [number, number, string][] = [
  [334, 291, "KL"],
  [334, 259, "-"],
  [334, 243, "7"],
  [334, 209, "300*600"],
  [366, 291, "C8"],
  [366, 243, "1"],
  [366, 117, "4)"],
  [366, 67, "2C25"],
];

const Drawing = () => (
  <svg className="absolute inset-0 h-full w-full bg-black font-['Roboto',sans-serif]" aria-label="梁平面图">
    <path d="M352 36h43v43h-43zM352 374h43v43h-43z" fill="#7f00ff" />
    <path d="M366 0h14v395h-14z" fill="#0080ff" />
    <path d="m363 57.500 17-10.500v21zM363 395.500l17-10.500v21z" fill="#ff0" />
    <path d="M0 395h63v10H0z" fill="#0f0" />
    <path d="M62.500 0v400M218.500 0v400M373.500 0v400M0 57.500h373M0 183.500h373M0 240.500h373M0 282.500h373M0 395.500h373M0 400.500h373" stroke="#f00" />
    {bubbles.map(([x, y, t]) => (
      <g key={t}>
        <path d="M-5-12 0-13 5-12 12-5 13 0 12 5 5 12 0 13-5 12-12 5-13 0-12-5z" transform={`translate(${x} ${y})`} fill="none" stroke="#008a00" />
        <text x={x} y={y + 5} textAnchor="middle" fontSize="15" fill="#d0d0d0" className="font-medium mix-blend-difference">
          {t}
        </text>
      </g>
    ))}
    <g fill="#fff" fontSize="29" className="mix-blend-difference">
      {beamNotes.map(([x, y, t]) => (
        <text key={t} transform={`translate(${x} ${y}) rotate(-90)`}>
          {t}
        </text>
      ))}
      <text transform="translate(362 258) rotate(-90)" fontSize="24" className="font-['Liberation_Mono',monospace]">
        @
      </text>
    </g>
    <path d="m361.500 270.500 24 24M385.500 270.500l-24 24" stroke="#fff" strokeWidth="1.800" className="mix-blend-difference" />
    <path d="M340 290h33" stroke="#fff" strokeWidth="2" className="mix-blend-difference" />
    <path d="M53 457v-38h-2.500L55 408l4 11h-2v38z" fill="#0f0" />
    <path d="M55 455h37v-3l12 5-12 4.500V459H55z" fill="#f00" />
    <text x="64" y="420" fontSize="14" fill="#0f0" className="font-light">
      Y
    </text>
    <text x="92" y="446" fontSize="14" fill="#f00" className="font-light">
      X
    </text>
  </svg>
);

const Dialog = () => (
  <div role="dialog" aria-labelledby="confirm-title" className="absolute left-[329px] top-[108px] flex h-[122px] w-[362px] flex-col border border-[#1883d7] bg-white">
    <h2 id="confirm-title" className="px-[3px] py-1 leading-4">
      确认
    </h2>
    <div className="flex flex-1 items-center gap-[11px] pl-[11px]">
      <span className="flex h-[30px] w-[30px] items-center justify-center rounded-full border border-[#0b4a86] bg-[#0069c8] text-[22px] text-white">?</span>
      <p className="pb-0.5">是否在指定位置打断</p>
    </div>
    <div className="flex h-[43px] items-center justify-end gap-2 border-t border-[#dfdfdf] bg-[#f0f0f0] pr-[11px]">
      <button type="button" className="h-[23px] w-[66px] border-2 border-[#0078d7] bg-[#e1e1e1] leading-4">
        是(Y)
      </button>
      <button type="button" className="h-[23px] w-[66px] border border-[#adadad] bg-[#e1e1e1] leading-4">
        否(N)
      </button>
    </div>
  </div>
);

const Spin = ({ label, value, width }: { label: string; value: string; width: string }) => (
  <div className={`flex h-[23px] shrink-0 items-center border border-[#7a7a7a] bg-[#f3f3f3] ${width}`}>
    <input aria-label={label} defaultValue={value} className="min-w-0 flex-1 bg-transparent pr-2.5 text-right text-[#7d7d7d] outline-none" />
    <svg viewBox="0 0 8 18" className="mr-1 h-[18px] w-2" aria-hidden="true">
      <path d="M1.500 5h5L4 2.500zM1.500 13h5L4 15.500z" fill="#666" />
    </svg>
  </div>
);

const Cell = ({ text, width }: { text: string; width: string }) => (
  <div className={`h-5 overflow-hidden border border-[#cfcfcf] bg-linear-to-b from-white to-[#f0f0f0] px-px leading-[18px] ${width}`}>
    <Cells text={text} />
  </div>
);

const TaskButton = ({ name, children, running, active }: { name: string; children: React.ReactNode; running?: boolean; active?: boolean }) => (
  <button type="button" aria-label={name} className={`flex h-10 w-12 flex-col items-center ${active ? "bg-[#454e52]" : ""}`}>
    <span className="flex flex-1 items-center">{children}</span>
    <span className={`h-0.5 ${active ? "w-12" : "w-10"} ${running || active ? "bg-[#76b9ed]" : "bg-transparent"}`} />
  </button>
);

const Logo = ({ size }: { size: string }) => (
  <Svg size={size}>
    <rect width="16" height="16" rx="2.500" fill="#0a93ea" />
    <path d="M10 5.200Q10 3 8.600 3 7.700 3.100 7.700 5v6q0 1.900-1.900 1.900M12.800 8H5Q3 8 3 6.300M12.800 8v.5q0 2-2 2" fill="none" stroke="#fff" strokeWidth="1.300" />
  </Svg>
);

const Taskbar = () => (
  <footer className="flex h-10 shrink-0 items-center bg-[#010b0f] text-white">
    <button type="button" aria-label="开始" className="flex h-10 w-12 items-center justify-center bg-black">
      <Svg>
        <path d="M0 2.300 6.700 1.300v6.200H0zM7.600 1.200 16 0v7.500H7.600zM0 8.400h6.700v6.300L0 13.700zM7.600 8.400H16V16l-8.400-1.200z" fill="#fff" />
      </Svg>
    </button>
    <label className="flex h-10 w-[344px] items-center bg-[#333] pl-[9px] pr-3">
      <svg viewBox="0 0 22 22" className="mr-[5px] h-[22px] w-[22px]" aria-hidden="true">
        <circle cx="11" cy="11" r="9" fill="none" stroke="#f2f2f2" strokeWidth="3" />
      </svg>
      <input aria-label="搜索" placeholder="在这里输入你要搜索的内容" className="min-w-0 flex-1 bg-transparent text-[14px] outline-none placeholder:text-[#9a9a9a]" />
      <Svg>
        <path d="M5.500 1h5v9h-5zM3 7v5.500h10V7M8 12.500V16M5.500 15.500h5" fill="none" stroke="#a5a5a5" />
      </Svg>
    </label>
    <div className="flex">
      <TaskButton name="任务视图">
        <svg viewBox="0 0 20 16" className="h-4 w-5" aria-hidden="true">
          <path d="M5 1.500h10v13H5zM2.500 3H.7v10h1.800M17.500 3h1.800v10h-1.800" fill="none" stroke="#fff" strokeWidth="1.200" />
        </svg>
      </TaskButton>
      <TaskButton name="浏览器">
        <svg viewBox="0 0 24 24" className="h-6 w-6" aria-hidden="true">
          <rect x="3" y="2" width="20" height="20" rx="4" fill="#242628" />
          <path d="M19 5Q12 0 6 5q-5 6 0 12 5 5 11 2 5-4 2-8-4-4-8-1-2 3 1 4 3 1 4-1M16 6q-6-3-9 2-2 6 3 8 5 1 7-2" fill="none" stroke="#c5c5c5" strokeWidth="1.200" />
        </svg>
      </TaskButton>
    </div>
    <div className="ml-[5px] flex gap-px">
      <TaskButton name="Edge">
        <FaEdgeLegacy className="h-[21px] w-[21px] text-[#0078d7]" />
      </TaskButton>
      <TaskButton name="Internet Explorer">
        <span className="relative flex h-6 w-6 items-center justify-center">
          <FaInternetExplorer className="h-[22px] w-[22px] text-[#4fb9f0]" />
          <svg viewBox="0 0 24 24" className="absolute inset-0 h-6 w-6" aria-hidden="true">
            <path d="M2 21Q-1 17 8 8T22 2q2 2-1 6" fill="none" stroke="#f8cf3a" strokeWidth="2" />
          </svg>
        </span>
      </TaskButton>
      <TaskButton name="文件资源管理器" running>
        <svg viewBox="0 0 24 20" className="h-5 w-6" aria-hidden="true">
          <path d="M1 1h8l2 2h11v15H1z" fill="#fbdc7c" />
          <path d="M1 5h21" stroke="#e9b94a" />
          <path d="M5 10h13v9h-3v-5H8v5H5z" fill="#3ea6dd" />
        </svg>
      </TaskButton>
      <TaskButton name="广联达" running>
        <svg viewBox="0 0 24 24" className="h-6 w-6" aria-hidden="true">
          <path d="M22 1Q21 4 16 3 6-1 1.500 7-1 17 6 22q8 3 14-3 4-6 0-9l-7-1q-4 1-3 4 3-2 5 0 1 4-3 5-5 0-5-6 1-6 8-5 7 1 7-6z" fill="#1f97ea" />
          <path d="M3 8q4-6 11-4" fill="none" stroke="#8fd3ff" />
        </svg>
      </TaskButton>
      <TaskButton name="360浏览器" running>
        <svg viewBox="0 0 24 24" className="h-6 w-6" aria-hidden="true">
          <circle cx="12" cy="12" r="10" fill="#3fae29" stroke="#e8ffe0" strokeWidth="1.500" />
          <path d="M6.500 13H18q0-6-6-6-5 0-5.500 6 1 5 6 5 4 0 5-3" fill="none" stroke="#fff" strokeWidth="2.500" />
          <path d="M2 19Q0 16 8 9T22 4" fill="none" stroke="#b5ee7a" strokeWidth="1.500" />
        </svg>
      </TaskButton>
      <TaskButton name="钢筋算量" active>
        <Logo size="h-6 w-6" />
      </TaskButton>
    </div>
    <div className="ml-auto flex items-center whitespace-nowrap">
      <span>链接</span>
      <p className="ml-5 w-[50px] text-center leading-[17px]">
        3%
        <br />
        CPU使用
      </p>
      <div className="ml-[17px] flex items-center gap-2">
        <Svg>
          <path d="m2 11 6-6 6 6" fill="none" stroke="#fff" strokeWidth="1.300" />
        </Svg>
        <Svg>
          <path d="M5 5.500h9.500v6H5zM15.500 7v3M1 3v3h4V3M3 6v3h2M2 1.500V3M4 1.500V3" fill="none" stroke="#fff" />
          <path d="M7 7h6v3H7z" fill="#fff" />
        </Svg>
        <Svg>
          <path d="M2 14Q3 5 13 3M5 14q1-6 8-7.500M8 14q1-3 5-4" fill="none" stroke="#c9c9c9" strokeWidth="1.200" />
          <circle cx="12.500" cy="13" r="1.300" fill="#fff" />
        </Svg>
        <Svg>
          <path d="M1 5.500h2.500L7 2v12l-3.500-3.500H1zM9.500 6q1.500 2 0 4M11.500 4q3 4 0 8" fill="none" stroke="#fff" />
          <path d="M13.500 2.500q4 5.500 0 11" fill="none" stroke="#777" />
        </Svg>
        <svg viewBox="0 0 24 14" className="h-3.5 w-6" aria-hidden="true">
          <path d="M.7.700h22.600v12.600H.7z" fill="none" stroke="#fff" strokeWidth="1.300" />
          <path d="M3 4h18M3 7h18" stroke="#fff" strokeWidth="1.300" strokeDasharray="1.500 1" />
          <path d="M3 10h2M7 10h10M19 10h2" stroke="#fff" strokeWidth="1.300" />
        </svg>
        <span className="text-[14px]">英</span>
        <span className="ml-1.5 flex h-4 w-4 -rotate-6 items-center justify-center rounded-[3px] bg-[#f4511e] text-[15px] font-bold leading-4">S</span>
      </div>
      <p className="ml-3.5 w-[64px] text-center leading-[18px]">
        9:33
        <br />
        2018/7/10
      </p>
      <button type="button" aria-label="通知" className="ml-4 mr-2 flex h-6 w-7 items-center">
        <svg viewBox="0 0 28 26" className="h-[26px] w-7" aria-hidden="true">
          <path d="M1 2h16v13h-6v4l-4-4H1z" fill="#fff" />
          <path d="M4 5.500h10M4 8.500h10M4 11.500h7" stroke="#111" />
          <circle cx="17" cy="17" r="8" fill="#222" stroke="#888" />
          <text x="17" y="21.500" fontSize="12" textAnchor="middle" fill="#fff" className="font-bold">
            1
          </text>
        </svg>
      </button>
      <span className="h-10 w-1 border-l border-[#555]" />
    </div>
  </footer>
);

export default function App() {
  return (
    <div className="relative flex h-screen flex-col overflow-hidden bg-[#f0f0f0] font-['Noto_Sans','Noto_Sans_CJK_SC',sans-serif] text-[12px] leading-4 text-black">
      <svg className="absolute h-0 w-0" aria-hidden="true">
        <defs>
          <linearGradient id="gold" x1="0" y1="0" x2="1" y2="1">
            <stop offset="0" stopColor="#fff0b0" />
            <stop offset="1" stopColor="#d99a22" />
          </linearGradient>
          <linearGradient id="blue" x1="0" y1="0" x2="1" y2="1">
            <stop offset="0" stopColor="#f2f8ff" />
            <stop offset="1" stopColor="#5b92ea" />
          </linearGradient>
        </defs>
      </svg>

      <header className="flex h-[23px] shrink-0 items-center bg-white pl-0.5">
        <Logo size="h-4 w-4" />
        <h1 className="ml-[5px] whitespace-nowrap text-[#999]">
          <Mixed text={"广联达BIM钢筋算量软件 GGJ2013 - [C:\\Users\\Administrator.PC-20141127NRHM\\Desktop\\白龙村-2018-02-02-19-24-35(2666版).GGJ12]"} latin="text-[13px]" />
        </h1>
        <div className="mb-0.5 ml-auto flex items-center gap-[34px] pr-[19px]">
          <button type="button" aria-label="最小化">
            <Svg size="h-3 w-3">
              <path d="M1 8.500h14" stroke="#888" strokeWidth="1.300" />
            </Svg>
          </button>
          <button type="button" aria-label="还原">
            <Svg size="h-3 w-3">
              <path d="M1 4.500h10.500V15H1zM4 4.500V1h10.500v10.500h-3" fill="none" stroke="#777" strokeWidth="1.300" />
            </Svg>
          </button>
          <button type="button" aria-label="关闭窗口">
            <Svg size="h-3 w-3">
              <path d="m1 1 14 14M15 1 1 15" stroke="#777" strokeWidth="1.300" />
            </Svg>
          </button>
        </div>
      </header>

      <nav className="flex h-[30px] shrink-0 items-center whitespace-nowrap pl-[7px]">
        <div className="flex gap-[11px]">
          {menus.map((m) => (
            <button type="button" key={m}>
              {m}
            </button>
          ))}
        </div>
        <div className="ml-2 flex gap-px">
          <Tool icon="newDoc" label="新建变更" arrow />
          <Tool icon="robot" label="广小二" />
        </div>
        <div className="ml-auto flex h-[26px] w-[187px] items-center bg-linear-to-b from-[#fafafa] to-[#f0f0f0] pl-7">
          <a href="#tip" className="text-[#0f6b6b]">
            如何快速布置自定义范..
          </a>
        </div>
        <div className="ml-0.5 flex h-[26px] w-[240px] items-center bg-linear-to-b from-[#fafafa] to-[#f0f0f0] pl-px pr-[5px]">
          <Tool icon="user" label="13907298339" arrow />
          <span className="ml-[7px]">造价豆:0</span>
          <button type="button" aria-label="消息" className="ml-2">
            <Icon name="bell" />
          </button>
          <span className="ml-auto">
            <More />
          </span>
        </div>
      </nav>

      <div className="mt-px flex h-7 shrink-0 gap-[3px]">
        <Bar className="w-[150px] pl-0.5">
          <Tool icon="newFile" name="新建" />
          <Tool icon="folderOpen" name="打开" arrow />
          <Tool icon="save" name="保存" />
          <Sep />
          <Tool icon="undo" name="撤销" arrow />
          <span className="ml-auto mr-0.5">
            <More />
          </span>
        </Bar>
        <Bar className="w-[548px] pl-px">
          <Tool icon="define" label="定义" />
          <Tool icon="sigma" label="汇总计算" />
          <Tool icon="cloud" label="云检查" />
          <Tool icon="align3" label="平齐板顶" />
          <Tool icon="binoculars" label="查找图元" />
          <Tool icon="glasses" label="查看钢筋量" />
          <Tool icon="batch" label="批量选择" disabled />
          <span className="ml-auto mr-[3px]">
            <More />
          </span>
        </Bar>
        <Bar className="flex-1 pl-px">
          <span className="bg-white">
            <Tool icon="rect" label="二维" arrow />
          </span>
          <Tool icon="cube" label="俯视" arrow />
          <Tool icon="orbit" label="动态观察" />
          <Tool icon="local3d" label="局部三维" />
          <Sep />
          <Tool icon="full" label="全屏" />
          <Tool icon="zoom" label="缩放" arrow />
          <Tool icon="pan" label="平移" arrow />
          <Tool icon="screenRotate" label="屏幕旋转" arrow="tight" />
          <Sep />
          <Tool icon="floors" label="选择楼层" />
          <span className="ml-auto mr-[5px]">
            <More />
          </span>
        </Bar>
      </div>

      <div className="mt-0.5 flex min-h-0 flex-1 gap-[5px]">
        <Sidebar />
        <main className="flex min-w-0 flex-1 flex-col">
          <div className="flex h-7 shrink-0 pl-px">
            <Bar className="pl-[3px] pr-1">
              <Grip />
              <Tool icon="brush" label="删除" />
              <Sep />
              <Tool icon="copy" label="复制" />
              <Tool icon="mirror" label="镜像" />
              <Sep />
              <Tool icon="move" label="移动" />
              <Tool icon="rotate" label="旋转" />
              <Sep />
              <Tool icon="extend" label="延伸" />
              <Tool icon="trim" label="修剪" />
              <Sep />
              <Tool icon="breakIt" label="打断" active />
              <Tool icon="merge" label="合并" />
              <Tool icon="split" label="分割" disabled />
              <Sep />
              <Tool icon="alignTo" label="对齐" arrow="tight" />
              <Tool icon="offset" label="偏移" />
              <Tool icon="stretch" label="拉伸" />
              <Sep />
              <Tool icon="grip" label="设置夹点" disabled />
            </Bar>
          </div>
          <div className="flex h-7 shrink-0 gap-[3px] pl-px">
            <Bar className="pl-[3px]">
              <Grip />
              <Combo label="楼层" value="第7层" width="w-[58px]" />
              <Combo label="构件类型" value="梁" width="w-[69px]" />
              <Combo label="构件子类型" value="梁" width="w-[69px]" />
              <Combo label="构件名称" value="KL-1a" width="w-[69px]" />
              <Combo label="分层" value="分层1" width="w-[69px]" />
              <Sep />
              <Tool icon="props" label="属性" />
              <Tool icon="editBar" label="编辑钢筋" />
              <Tool icon="list" label="构件列表" />
              <Tool icon="pick" label="拾取构件" />
            </Bar>
            <Bar className="pl-[3px]">
              <Grip />
              <Tool icon="twoPoint" label="两点" />
              <Tool icon="parallel" label="平行" />
              <Tool icon="pointAngle" label="点角" arrow />
              <Tool icon="threeAxis" label="三点辅轴" arrow />
              <Tool icon="brush" label="删除辅轴" />
              <Tool icon="dim" label="尺寸标注" arrow />
            </Bar>
          </div>
          <div className="flex h-7 shrink-0 items-end gap-[3px] pb-px pl-px">
            <Bar className="flex-1 pl-[3px]">
              <Grip />
              <Tool icon="cursor" label="选择" arrow />
              <Sep />
              <Tool icon="line" label="直线" />
              <Tool icon="lengthPt" label="点加长度" />
              <Tool icon="arc" label="三点画弧" arrow />
              <Combo label="画弧方式" value="" width="w-14" />
              <Tool icon="rect" label="矩形" />
              <Sep />
              <Tool icon="smart" label="智能布置" arrow="tight" />
              <Sep />
              <Tool icon="beamEdit" label="修改梁段属性" />
              <Tool icon="annotate" label="原位标注" arrow />
              <Tool icon="support" label="设置支座" arrow />
              <Tool icon="spanCopy" label="梁跨数据复制" arrow />
              <Tool icon="recog" label="批量识别梁支座" />
              <Tool icon="applyTo" label="应用到同名梁" />
              <span className="ml-auto mr-[3px]">
                <More />
              </span>
            </Bar>
            <Bar className="w-8 pl-[3px]">
              <Grip />
              <span className="h-6 flex-1 bg-[#fcfcfc]" />
            </Bar>
          </div>

          <section className="relative min-h-0 flex-1 overflow-hidden bg-black">
            <Drawing />
            <Dialog />
            <svg viewBox="0 0 132 70" className="pointer-events-none absolute left-[486px] top-[179px] h-[70px] w-[132px]" aria-hidden="true">
              <ellipse cx="66" cy="35" rx="62" ry="30.500" fill="none" stroke="#f00" strokeWidth="7" />
            </svg>
          </section>

          <div className="mt-0.5 flex h-[29px] shrink-0 gap-[3px] pl-px">
            <Bar className="pl-[3px]">
              <Grip />
              <Tool icon="ortho" label="正交" />
              <Tool icon="snap" label="对象捕捉" active />
              <Tool icon="dynInput" label="动态输入" />
            </Bar>
            <Bar className="pl-1">
              <Grip />
              <Tool icon="cross" label="交点" />
              <Tool icon="perp" label="垂点" active />
              <Tool icon="mid" label="中点" active />
              <Tool icon="vertex" label="顶点" />
              <Tool icon="coord" label="坐标" />
            </Bar>
            <Bar className="pl-1 pr-1.5 text-[#7d7d7d]">
              <Grip />
              <span className="text-black">
                <Combo label="偏移方式" value="不偏移" width="w-[58px]" />
              </span>
              <Sep />
              <span className="w-[17px]">X=</span>
              <Spin label="X偏移" value="0" width="w-[58px]" />
              <span className="w-[25px]">mm</span>
              <span className="w-[18px]">Y=</span>
              <Spin label="Y偏移" value="0" width="w-[58px]" />
              <span className="w-[21px]">mm</span>
              <Sep />
              <label className="flex items-center gap-2 pl-px pr-1 text-black">
                <input type="checkbox" className="h-[11px] w-[11px] appearance-none border border-[#999] bg-[#f5f5f5]" />
                旋转
              </label>
              <Spin label="旋转角度" value="0.000" width="w-[68px]" />
              <span>°</span>
            </Bar>
          </div>
        </main>
      </div>

      <div className="mt-px flex h-[21px] shrink-0 gap-0.5 border-t border-white bg-[#f0f0f0]">
        <Cell text="X=116145 Y=-9082" width="w-[148px]" />
        <Cell text="层高:2.8m" width="w-[78px]" />
        <Cell text="底标高:20.35m" width="w-[98px]" />
        <Cell text="1(1)" width="w-12" />
        <Cell text="按鼠标左键选择打断点或Shift+左键指定打断点，支持多选，按右键确认选择" width="flex-1" />
        <Cell text="634.6 FPS" width="w-[70px]" />
      </div>

      <Taskbar />

      <div className="absolute right-[349px] top-[-26px] flex h-11 w-11 items-end justify-center rounded-full border border-[#8b9a8f] bg-[#3dc45c] pb-[3px] font-bold leading-3 text-white shadow-[inset_0_0_0_2px_#d9efdd]">64</div>
    </div>
  );
}
